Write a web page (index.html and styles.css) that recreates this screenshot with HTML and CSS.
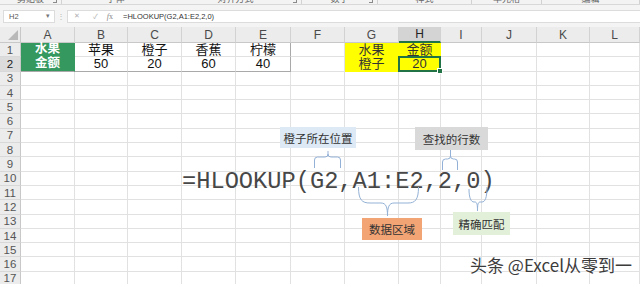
FILE: index.html
```html
<!DOCTYPE html>
<html lang="zh-CN">
<head>
<meta charset="utf-8">
<title>HLOOKUP</title>
<link rel="stylesheet" href="styles.css">
</head>
<body>
<div class="app">
  <div class="ribbon">
    <div class="grp w62"><span>剪贴板</span><i class="launch"></i></div>
    <div class="grp w108 nosep"><span>字体</span></div>
    <div class="grp w132"><span>对齐方式</span><i class="launch"></i></div>
    <div class="grp w76"><span>数字</span><i class="launch"></i></div>
    <div class="grp w94"><span>样式</span></div>
    <div class="grp w70"><span>单元格</span></div>
    <div class="grp w98"><span>编辑</span></div>
  </div>
  <div class="fbar">
    <div class="namebox"><span>H2</span><span class="dd">▾</span></div>
    <div class="dots">⋮</div>
    <div class="finput">
      <span class="fb fb-x">✕</span><span class="fb fb-ok">✓</span><span class="fb fb-fx"><i>f</i>x</span>
      <span class="ftext">=HLOOKUP(G2,A1:E2,2,0)</span>
    </div>
  </div>
  <div class="sheet">
    <div class="corner"></div>
    <div class="ch">A</div><div class="ch">B</div><div class="ch">C</div><div class="ch">D</div><div class="ch">E</div><div class="ch">F</div><div class="ch">G</div><div class="ch sel">H</div><div class="ch">I</div><div class="ch">J</div><div class="ch">K</div><div class="ch">L</div>

    <div class="rh">1</div>
    <div class="c green">水果</div><div class="c">苹果</div><div class="c">橙子</div><div class="c">香蕉</div><div class="c br">柠檬</div><div class="c"></div><div class="c yel">水果</div><div class="c yel">金额</div><div class="c"></div><div class="c"></div><div class="c"></div><div class="c"></div>

    <div class="rh sel">2</div>
    <div class="c green bb">金额</div><div class="c bb">50</div><div class="c bb">20</div><div class="c bb">60</div><div class="c bb br">40</div><div class="c"></div><div class="c yel">橙子</div><div class="c yel act">20</div><div class="c"></div><div class="c"></div><div class="c"></div><div class="c"></div>

    <div class="rh">3</div><div class="c"></div><div class="c"></div><div class="c"></div><div class="c"></div><div class="c"></div><div class="c"></div><div class="c"></div><div class="c"></div><div class="c"></div><div class="c"></div><div class="c"></div><div class="c"></div>
    <div class="rh">4</div><div class="c"></div><div class="c"></div><div class="c"></div><div class="c"></div><div class="c"></div><div class="c"></div><div class="c"></div><div class="c"></div><div class="c"></div><div class="c"></div><div class="c"></div><div class="c"></div>
    <div class="rh">5</div><div class="c"></div><div class="c"></div><div class="c"></div><div class="c"></div><div class="c"></div><div class="c"></div><div class="c"></div><div class="c"></div><div class="c"></div><div class="c"></div><div class="c"></div><div class="c"></div>
    <div class="rh">6</div><div class="c"></div><div class="c"></div><div class="c"></div><div class="c"></div><div class="c"></div><div class="c"></div><div class="c"></div><div class="c"></div><div class="c"></div><div class="c"></div><div class="c"></div><div class="c"></div>
    <div class="rh">7</div><div class="c"></div><div class="c"></div><div class="c"></div><div class="c"></div><div class="c"></div><div class="c"></div><div class="c"></div><div class="c"></div><div class="c"></div><div class="c"></div><div class="c"></div><div class="c"></div>
    <div class="rh">8</div><div class="c"></div><div class="c"></div><div class="c"></div><div class="c"></div><div class="c"></div><div class="c"></div><div class="c"></div><div class="c"></div><div class="c"></div><div class="c"></div><div class="c"></div><div class="c"></div>
    <div class="rh">9</div><div class="c"></div><div class="c"></div><div class="c"></div><div class="c"></div><div class="c"></div><div class="c"></div><div class="c"></div><div class="c"></div><div class="c"></div><div class="c"></div><div class="c"></div><div class="c"></div>
    <div class="rh">10</div><div class="c"></div><div class="c"></div><div class="c"></div><div class="c"></div><div class="c"></div><div class="c"></div><div class="c"></div><div class="c"></div><div class="c"></div><div class="c"></div><div class="c"></div><div class="c"></div>
    <div class="rh">11</div><div class="c"></div><div class="c"></div><div class="c"></div><div class="c"></div><div class="c"></div><div class="c"></div><div class="c"></div><div class="c"></div><div class="c"></div><div class="c"></div><div class="c"></div><div class="c"></div>
    <div class="rh">12</div><div class="c"></div><div class="c"></div><div class="c"></div><div class="c"></div><div class="c"></div><div class="c"></div><div class="c"></div><div class="c"></div><div class="c"></div><div class="c"></div><div class="c"></div><div class="c"></div>
    <div class="rh">13</div><div class="c"></div><div class="c"></div><div class="c"></div><div class="c"></div><div class="c"></div><div class="c"></div><div class="c"></div><div class="c"></div><div class="c"></div><div class="c"></div><div class="c"></div><div class="c"></div>
    <div class="rh">14</div><div class="c"></div><div class="c"></div><div class="c"></div><div class="c"></div><div class="c"></div><div class="c"></div><div class="c"></div><div class="c"></div><div class="c"></div><div class="c"></div><div class="c"></div><div class="c"></div>
    <div class="rh">15</div><div class="c"></div><div class="c"></div><div class="c"></div><div class="c"></div><div class="c"></div><div class="c"></div><div class="c"></div><div class="c"></div><div class="c"></div><div class="c"></div><div class="c"></div><div class="c"></div>
    <div class="rh">16</div><div class="c"></div><div class="c"></div><div class="c"></div><div class="c"></div><div class="c"></div><div class="c"></div><div class="c"></div><div class="c"></div><div class="c"></div><div class="c"></div><div class="c"></div><div class="c"></div>
    <div class="rh">17</div><div class="c"></div><div class="c"></div><div class="c"></div><div class="c"></div><div class="c"></div><div class="c"></div><div class="c"></div><div class="c"></div><div class="c"></div><div class="c"></div><div class="c"></div><div class="c"></div>
  </div>

  <div class="formula">=HLOOKUP(G2,A1:E2,2,0)</div>

  <div class="note n-pos">橙子所在位置</div>
  <div class="note n-row">查找的行数</div>
  <div class="note n-area">数据区域</div>
  <div class="note n-exact">精确匹配</div>

  <svg class="braces" width="640" height="284" viewBox="0 0 640 284">
    <path d="M314.5,168 V160 Q314.5,157 317.5,157 H325 Q328,157 328,154 V151 M328,154 Q328,157 331,157 H337.5 Q340.5,157 340.5,160 V168"/>
    <path d="M442.5,170 V162 Q442.5,159 445.5,159 H447.5 Q450.5,159 450.5,156 V150 M450.5,156 Q450.5,159 453.5,159 H454.5 Q457.5,159 457.5,162 V170"/>
    <path d="M358.5,187 C358.5,200 362,203 370,203 H381 C386,203 387.5,207 387.5,216 C387.5,207 389,203 394,203 H408 C415,203 418.5,200 418.5,187"/>
    <path d="M469,189 C469,198 471,202 474,202 H475 C477,202 477.5,205 477.5,211 C477.5,205 478,202 480,202 H482 C485,202 487,198 487,187"/>
  </svg>

  <div class="watermark">头条 @Excel从零到一</div>
</div>
</body>
</html>
```

FILE: styles.css
```css
html, body {
  margin: 0;
  padding: 0;
  background: #fff;
}

body {
  font-family: "Liberation Sans", "Noto Sans CJK SC", sans-serif;
}

.app {
  position: relative;
  width: 640px;
  height: 284px;
  overflow: hidden;
}

/* ---------- ribbon strip ---------- */
.ribbon {
  display: flex;
  height: 4px;
  background: #f3f3f3;
  border-bottom: 1px solid #d8d8d8;
  overflow: hidden;
}

.grp {
  position: relative;
  display: flex;
  justify-content: center;
  box-sizing: border-box;
  border-right: 1px solid #d2d2d2;
  font-family: "Noto Sans CJK SC", sans-serif;
  font-size: 9px;
  line-height: 9px;
  color: #666;
}

.grp.nosep {
  border-right-color: transparent;
}

.grp span {
  margin-top: -6px;
}

.launch {
  position: absolute;
  right: 4px;
  top: 0;
  width: 3px;
  height: 2px;
  border-right: 1px solid #8a8a8a;
  border-bottom: 1px solid #8a8a8a;
}

.w62 { width: 62px; }
.w108 { width: 108px; }
.w132 { width: 132px; }
.w76 { width: 76px; }
.w94 { width: 94px; }
.w70 { width: 70px; }
.w98 { width: 98px; }

/* ---------- formula bar ---------- */
.fbar {
  display: flex;
  align-items: center;
  height: 22px;
  padding-left: 3px;
  box-sizing: border-box;
  background: #f4f4f4;
}

.namebox {
  display: flex;
  align-items: center;
  justify-content: space-between;
  width: 52px;
  height: 13px;
  padding: 0 4px 0 5px;
  box-sizing: border-box;
  background: #fff;
  border: 1px solid #dcdcdc;
  font-size: 7.5px;
  color: #555;
}

.namebox .dd {
  font-size: 7px;
  color: #777;
}

.dots {
  width: 12px;
  text-align: center;
  font-size: 8px;
  color: #b8b8b8;
}

.finput {
  flex: 1;
  display: flex;
  align-items: center;
  height: 13px;
  box-sizing: border-box;
  background: #fff;
  border: 1px solid #dcdcdc;
  border-right: none;
  font-size: 7.5px;
  color: #333;
}

.fb {
  color: #b0b0b0;
  font-size: 7px;
}

.fb-x { margin-left: 6px; }
.fb-ok { margin-left: 13px; }
.fb-fx { margin-left: 9px; color: #888; font-family: "Liberation Serif", serif; font-size: 8px; }
.ftext { margin-left: 10px; }

/* ---------- sheet grid ---------- */
.sheet {
  display: grid;
  grid-template-columns: 21px 54px 53px 54px 54px 55px 54px 54px 42px 41px 55px 53px 50px;
  grid-template-rows: 16px repeat(17, 14.3px);
}

.corner {
  position: relative;
  background: #ececec;
  border-right: 1px solid #c8c8c8;
  border-bottom: 1px solid #c8c8c8;
}

.corner::after {
  content: "";
  position: absolute;
  right: 2px;
  bottom: 2px;
  width: 0;
  height: 0;
  border-left: 10px solid transparent;
  border-bottom: 10px solid #b9b9b9;
}

.ch {
  display: flex;
  align-items: center;
  justify-content: center;
  box-sizing: border-box;
  background: #ececec;
  border-right: 1px solid #d2d2d2;
  border-bottom: 1px solid #c8c8c8;
  font-size: 12px;
  color: #4a4a4a;
}

.ch.sel {
  background: #d4d4d4;
  border-bottom: 2px solid #217346;
  color: #222;
}

.rh {
  display: flex;
  align-items: center;
  justify-content: center;
  box-sizing: border-box;
  background: #ececec;
  border-right: 1px solid #c8c8c8;
  border-bottom: 1px solid #d8d8d8;
  font-size: 11.5px;
  color: #555;
}

.rh.sel {
  background: #dcdcdc;
  color: #222;
}

.c {
  display: flex;
  align-items: center;
  justify-content: center;
  box-sizing: border-box;
  border-right: 1px solid #e1e1e1;
  border-bottom: 1px solid #e1e1e1;
  font-size: 13px;
  line-height: 13px;
  color: #111;
}

.green {
  background: #35985f;
  border-right-color: #35985f;
  border-bottom-color: #35985f;
  color: #fff;
  font-weight: bold;
  font-size: 12.5px;
}

.yel {
  background: #ffff00;
  border-right-color: #ffff00;
  border-bottom-color: #ffff00;
  color: #333;
}

.c.bb { border-bottom-color: #a9a9a9; }
.c.br { border-right-color: #a9a9a9; }

.act {
  position: relative;
}

.act::after {
  content: "";
  position: absolute;
  left: -1px;
  top: -1px;
  right: -1px;
  bottom: -1px;
  border: 2px solid #217346;
}

.act::before {
  content: "";
  position: absolute;
  right: -3px;
  bottom: -3px;
  width: 4px;
  height: 4px;
  background: #217346;
  border: 1px solid #fff;
  z-index: 1;
}

/* ---------- annotations ---------- */
.formula {
  position: absolute;
  left: 182px;
  top: 168px;
  font-family: "Liberation Mono", monospace;
  font-size: 23.7px;
  line-height: 28px;
  color: #474747;
  white-space: nowrap;
}

.note {
  position: absolute;
  display: flex;
  align-items: center;
  justify-content: center;
  font-family: "Noto Sans CJK SC", sans-serif;
  font-size: 11.5px;
  color: #333;
}

.n-pos {
  left: 280px;
  top: 127px;
  width: 76px;
  height: 21px;
  background: #dde9f5;
}

.n-row {
  left: 415px;
  top: 127px;
  width: 73px;
  height: 23px;
  background: #d9d9d9;
}

.n-area {
  left: 362px;
  top: 218px;
  width: 60px;
  height: 22px;
  background: #f2a475;
}

.n-exact {
  left: 453px;
  top: 212px;
  width: 57px;
  height: 23px;
  background: #e2efd9;
}

.braces {
  position: absolute;
  left: 0;
  top: 0;
  pointer-events: none;
}

.braces path {
  fill: none;
  stroke: #93b1d6;
  stroke-width: 1;
}

.watermark {
  position: absolute;
  left: 470px;
  top: 255px;
  font-family: "Noto Sans CJK SC", sans-serif;
  font-size: 17px;
  line-height: 20px;
  color: #3c3c3c;
  white-space: nowrap;
  text-shadow: 0 0 2px #fff, 0 0 1px #fff;
}
```
